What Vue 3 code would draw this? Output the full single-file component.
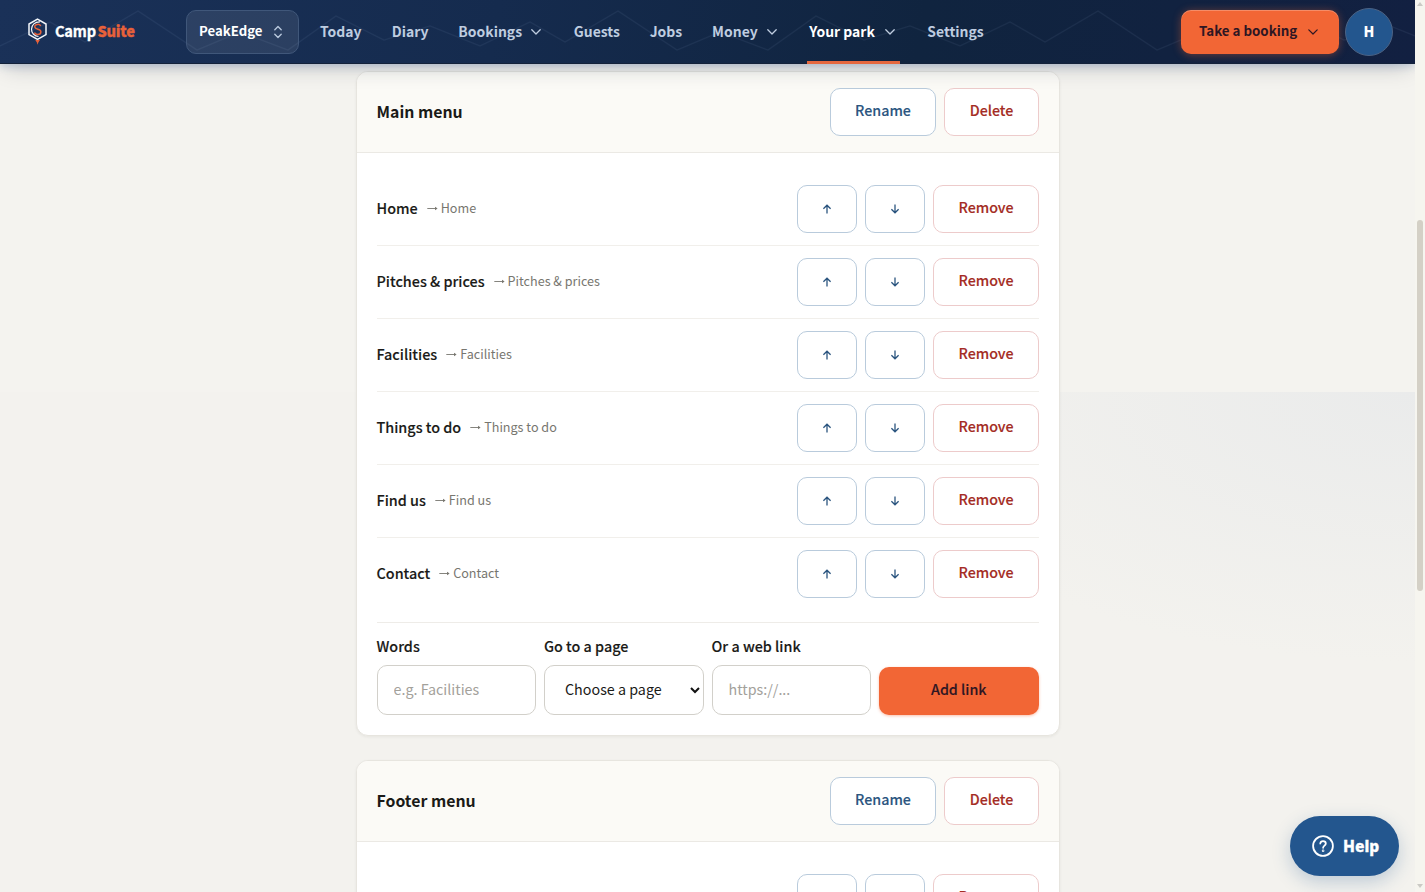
<script setup>
const nav = [
  { label: 'Today', w: 42 },
  { label: 'Diary', w: 36.6 },
  { label: 'Bookings', w: 64, menu: true },
  { label: 'Guests', w: 46 },
  { label: 'Jobs', w: 32.6 },
  { label: 'Money', w: 45.6, menu: true },
  { label: 'Your park', w: 66.4, menu: true, active: true },
  { label: 'Settings', w: 57 }
]
const links = ['Home', 'Pitches & prices', 'Facilities', 'Things to do', 'Find us', 'Contact']
const menus = [
  { title: 'Main menu', links },
  { title: 'Footer menu', links: ['Home'] }
]
</script>

<template>
  <div class="window">
    <div class="page">
      <header class="topbar">
        <svg class="ridge" width="1415" height="64">
          <defs>
            <pattern id="ridge" width="480" height="64" patternUnits="userSpaceOnUse">
              <path d="M0 46 50 22 85 42 138 11 197 50 240 32 288 50 336 16 384 40 430 26 480 46" fill="none" stroke="#9cc0e8" stroke-opacity=".075" stroke-width="1.3" />
            </pattern>
          </defs>
          <rect width="1415" height="64" fill="url(#ridge)" />
        </svg>
        <div class="brand">
          <svg width="22" height="28" viewBox="0 0 22 28" fill="none">
            <path d="M10.5 2.200 19 7v10.600l-8.500 4.900L2 17.600V7z" stroke="#f3f6fa" stroke-width="1.500" />
            <path d="M13 4.900C8 4.700 4.500 8 4.500 12.200c0 4 3 7 7 7.300" stroke="#f3f6fa" stroke-width="1.200" />
            <path d="M13.700 9c-.6-1.300-2-1.800-3.400-1.600-1.600.2-2.700 1.300-2.500 2.700.4 2.800 6.100 1.500 6.100 4.600 0 1.700-1.400 2.800-3.200 2.800-1.500 0-2.700-.6-3.300-1.900" stroke="#e8613a" stroke-width="1.500" />
            <path d="M8.300 23h4.600l-1.600 2.500-.7 2.200-.7-2.200z" fill="#e8613a" />
          </svg>
          <span class="wordmark">Camp<b>Suite</b></span>
        </div>
        <button class="site">
          <span>PeakEdge</span>
          <svg width="10" height="14" viewBox="0 0 10 14" fill="none" stroke="currentColor" stroke-width="1.400" stroke-linecap="round" stroke-linejoin="round"><path d="M1.800 4.700 5 1.600l3.200 3.100M1.800 9.300 5 12.400l3.200-3.100" /></svg>
        </button>
        <nav>
          <a v-for="n in nav" :key="n.label" :class="{ active: n.active }">
            <span :style="{ width: n.w + 'px' }">{{ n.label }}</span>
            <svg v-if="n.menu" width="10" height="6" viewBox="0 0 10 6" fill="none" stroke="#bfcde0" stroke-width="1.300" stroke-linecap="round" stroke-linejoin="round"><path d="M.8.8 5 5 9.200.8" /></svg>
          </a>
        </nav>
        <button class="book">
          <span>Take a booking</span>
          <svg width="10" height="6" viewBox="0 0 10 6" fill="none" stroke="currentColor" stroke-width="1.200" stroke-linecap="round" stroke-linejoin="round"><path d="M.8.8 5 5 9.200.8" /></svg>
        </button>
        <div class="avatar">H</div>
      </header>

      <main>
        <section v-for="(m, mi) in menus" :key="m.title" class="card">
          <div class="card-head">
            <h2>{{ m.title }}</h2>
            <button class="btn blue rename">Rename</button>
            <button class="btn red delete">Delete</button>
          </div>
          <div class="card-body">
            <div v-for="l in m.links" :key="l" class="row">
              <span class="name">{{ l }}</span>
              <span class="dest">
                <svg width="11" height="7" viewBox="0 0 11 7" fill="none" stroke="currentColor"><path d="M.3 3.500h9" stroke-width=".9" /><path d="M8 1.700 10.600 3.500 8 5.300z" fill="currentColor" stroke="none" /></svg>
                {{ l }}
              </span>
              <button class="btn blue arrow">
                <svg width="10" height="10" viewBox="0 0 10 10" fill="none" stroke="currentColor" stroke-width="1.300"><path d="M5 9.500V1.200M1.400 4.800 5 1.200l3.600 3.600" /></svg>
              </button>
              <button class="btn blue arrow">
                <svg width="10" height="10" viewBox="0 0 10 10" fill="none" stroke="currentColor" stroke-width="1.300"><path d="M5 .5v8.300M1.400 5.200 5 8.800l3.600-3.600" /></svg>
              </button>
              <button class="btn red remove">Remove</button>
            </div>
            <div v-if="mi === 0" class="add">
              <label>Words<input placeholder="e.g. Facilities" /></label>
              <label>Go to a page
                <span class="select">
                  <span>Choose a page</span>
                  <svg width="10" height="7" viewBox="0 0 10 7" fill="none" stroke="#111" stroke-width="2"><path d="M1 1l4 4 4-4" /></svg>
                </span>
              </label>
              <label>Or a web link<input placeholder="https://..." /></label>
              <button class="submit">Add link</button>
            </div>
          </div>
        </section>
      </main>

      <button class="help">
        <svg width="22" height="22" viewBox="0 0 22 22" fill="none" stroke="#fff" stroke-width="1.800" stroke-linecap="round"><circle cx="11" cy="11" r="9.900" /><path d="M8.300 8.500C8.500 6.900 9.600 6.100 11 6.100c1.600 0 2.800 1 2.800 2.400 0 2-2.700 2.200-2.700 4.300" /><circle cx="11.100" cy="15.800" r=".4" /></svg>
        <span>Help</span>
      </button>
    </div>
    <div class="scrollbar">
      <i class="tri up"></i>
      <i class="thumb"></i>
      <i class="tri down"></i>
    </div>
  </div>
</template>

<style>
body {
  overflow: hidden;
}
</style>

<style scoped>
* {
  box-sizing: border-box;
}
.window {
  display: flex;
  width: 1425px;
  height: 892px;
  overflow: hidden;
  background: #f4f2ee;
  color: #1a1a17;
  font-family: "Noto Sans CJK SC", sans-serif;
  font-size: 14px;
  line-height: 20px;
}
.page {
  position: relative;
  width: 1415px;
  height: 892px;
  overflow: hidden;
  background: linear-gradient(#f4f3ef 392px, transparent 392px), radial-gradient(ellipse 560px 270px at 1415px 392px, #eaebeb, #f3f2ee), #f4f3ef;
}
button, input {
  font: inherit;
  margin: 0;
}
button {
  padding: 0;
}
.topbar {
  position: relative;
  z-index: 2;
  display: flex;
  align-items: center;
  height: 64px;
  padding-left: 27px;
  background: linear-gradient(100deg, #1a3158 0%, #152b4e 35%, #10243f 65%, #122041 100%);
  box-shadow: inset 0 -1px #13223a, 0 2px 8px rgba(40, 90, 170, .22), 0 8px 22px -6px rgba(20, 30, 50, .25);
}
.ridge {
  position: absolute;
  inset: 0;
}
.brand {
  position: relative;
  display: flex;
  align-items: center;
  width: 159px;
  gap: 6px;
}
.brand svg {
  position: relative;
  top: -1px;
}
.wordmark {
  padding-bottom: 2px;
  font: 700 14.600px/20px "Noto Sans CJK SC", sans-serif;
  letter-spacing: -.2px;
  color: #fff;
  -webkit-text-stroke: .3px;
}
.wordmark b {
  margin-left: 1.500px;
  color: #e8613a;
}
.site {
  position: relative;
  display: flex;
  align-items: center;
  justify-content: space-between;
  width: 113px;
  height: 44px;
  padding: 0 15px 3px 12px;
  border: 1px solid #40577a;
  border-radius: 10px;
  background: rgba(255, 255, 255, .09);
  color: #fff;
  font-weight: 700;
  font-size: 13.200px;
}
.site svg {
  position: relative;
  top: 1px;
  color: #b9c8dd;
}
nav {
  position: relative;
  display: flex;
  align-self: stretch;
  gap: 26px;
  margin-left: 19px;
}
nav a {
  display: flex;
  align-items: center;
  gap: 9px;
  height: 64px;
  padding: 0 1.850px 0 2px;
  color: #bfcde0;
  font-weight: 700;
  font-size: 13.950px;
  white-space: nowrap;
}
nav a span {
  padding-bottom: 2px;
}
nav a svg {
  margin-right: 2.700px;
}
nav a.active {
  margin-right: -1px;
  padding-right: 3px;
  color: #fff;
  box-shadow: inset 0 -3px #e5683f;
}
.book {
  position: absolute;
  left: 1181px;
  top: 10px;
  display: flex;
  align-items: center;
  justify-content: space-between;
  width: 158px;
  height: 44px;
  padding: 0 21px 3px 18px;
  border: 0;
  border-radius: 10px;
  background: #f26635;
  color: #2e1623;
  font-weight: 700;
  font-size: 13.300px;
  box-shadow: 0 1px 8px rgba(242, 102, 53, .4), inset 0 1px rgba(255, 255, 255, .25);
}
.book svg {
  position: relative;
  top: 1.500px;
}
.avatar {
  position: absolute;
  left: 1345px;
  top: 8px;
  width: 48px;
  height: 48px;
  border: 1.500px solid #4b6284;
  border-radius: 50%;
  background: #23568e;
  color: #fff;
  font-weight: 900;
  line-height: 44px;
  text-align: center;
}
main {
  width: 704px;
  margin: 7px auto 0;
}
.card {
  margin-bottom: 24px;
  border: 1px solid #e7e5df;
  border-radius: 12px;
  background: #fff;
  box-shadow: 0 1px 3px rgba(30, 30, 20, .06);
  overflow: hidden;
}
.card-head {
  display: flex;
  align-items: center;
  gap: 8px;
  height: 81px;
  padding: 0 20px;
  border-bottom: 1px solid #ebe9e4;
  background: #fbfaf6;
}
h2 {
  flex: 1;
  margin: 0;
  font-size: 15.850px;
  font-weight: 700;
}
.card-body {
  padding: 20px;
}
.row {
  display: flex;
  align-items: center;
  height: 73px;
  gap: 8px;
  border-bottom: 1px solid #f1efeb;
}
.row:nth-child(6) {
  height: 72px;
  border: 0;
}
.name, label, .btn, .submit {
  font-weight: 500;
  font-size: 14.250px;
  -webkit-text-stroke: .13px;
}
.name {
  padding-bottom: 2px;
  font-size: 14.380px;
}
.dest {
  display: flex;
  align-items: center;
  flex: 1;
  gap: 3px;
  padding: 0 0 2px 1px;
  color: #77766f;
  font-size: 12.600px;
}
.btn {
  display: flex;
  align-items: center;
  justify-content: center;
  height: 48px;
  padding: 0 0 4px 1px;
  border: 1px solid;
  border-radius: 10px;
  background: #fff;
}
.blue {
  border-color: #b9cbdc;
  color: #2b557f;
}
.red {
  border-color: #edcbcb;
  color: #a42c24;
}
.rename, .remove {
  width: 106px;
}
.delete {
  width: 95px;
}
.arrow {
  width: 60px;
  padding: 0;
}
.add {
  display: grid;
  grid-template-columns: repeat(4, 1fr);
  gap: 8px;
  align-items: end;
  margin-top: 12px;
  padding-top: 13px;
  border-top: 1px solid #eeece8;
}
label {
  display: flex;
  flex-direction: column;
  gap: 9px;
  font-size: 14.350px;
}
input, .select {
  width: 100%;
  height: 50px;
  padding: 0 16px 3px;
  border: 1px solid #d2d0ca;
  border-radius: 10px;
  background: #fff;
  font-size: 14.300px;
  font-weight: 400;
  -webkit-text-stroke: 0;
}
input::placeholder {
  color: #a3a19b;
  opacity: 1;
}
.select {
  display: flex;
  align-items: center;
  justify-content: space-between;
  padding: 0 3px 0 20px;
}
.select > span {
  padding-bottom: 3px;
}
.submit {
  height: 48px;
  padding-bottom: 5px;
  border: 0;
  border-radius: 10px;
  background: #f26635;
  color: #2e1623;
  box-shadow: 0 1px 3px rgba(242, 102, 53, .4);
}
.help {
  position: absolute;
  left: 1290px;
  top: 816px;
  display: flex;
  align-items: center;
  gap: 9px;
  width: 109px;
  height: 60px;
  padding-left: 22px;
  border: 0;
  border-radius: 30px;
  background: #23568e;
  color: #fff;
  font: 800 15.600px/22px "Noto Sans", sans-serif;
  -webkit-text-stroke: .3px;
  box-shadow: 0 6px 18px rgba(35, 86, 142, .25);
}
.scrollbar {
  display: flex;
  flex-direction: column;
  align-items: center;
  width: 10px;
  background: #f6f5ef;
}
.thumb {
  width: 6px;
  height: 371px;
  margin-top: 214px;
  border-radius: 3px;
  background: #d4d0c6;
}
.tri {
  border: 3px solid transparent;
}
.up {
  margin-top: 2px;
  border-bottom: 4px solid #cbcac5;
  border-top: 0;
}
.down {
  margin-top: auto;
  margin-bottom: 4px;
  border-top: 4px solid #cbcac5;
  border-bottom: 0;
}
</style>
